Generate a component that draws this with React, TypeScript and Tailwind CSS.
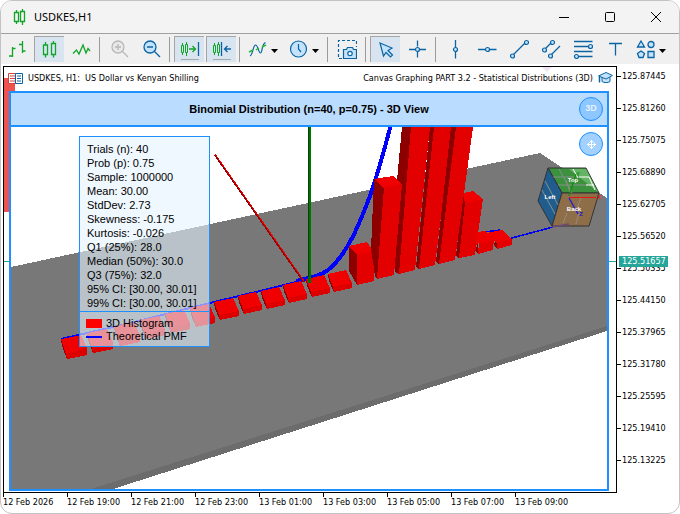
import React from 'react';
import clsx from 'clsx';

const GREEN = '#10a528';
const BLUE = '#0a64a4';
const SKY = '#c4e3fb';

const stats = [
  'Trials (n): 40',
  'Prob (p): 0.75',
  'Sample: 1000000',
  'Mean: 30.00',
  'StdDev: 2.73',
  'Skewness: -0.175',
  'Kurtosis: -0.026',
  'Q1 (25%): 28.0',
  'Median (50%): 30.0',
  'Q3 (75%): 32.0',
  '95% CI: [30.00, 30.01]',
  '99% CI: [30.00, 30.01]',
];

const prices = [
  '125.87445',
  '125.81260',
  '125.75075',
  '125.68890',
  '125.62705',
  '125.56520',
  '125.50335',
  '125.44150',
  '125.37965',
  '125.31780',
  '125.25595',
  '125.19410',
  '125.13225',
];

const times = [
  '12 Feb 2026',
  '12 Feb 19:00',
  '12 Feb 21:00',
  '12 Feb 23:00',
  '13 Feb 01:00',
  '13 Feb 03:00',
  '13 Feb 05:00',
  '13 Feb 07:00',
  '13 Feb 09:00',
];

// Low bars of the left tail: [x, y of the back right corner, width of the top, extra depth]
const tailBars = [
  [61, 335, 20, 2],
  [87, 329, 20, 2],
  [114, 322, 20, 2],
  [140, 316, 19, 1],
  [165, 310, 19, 1],
  [190, 304, 19, 1],
  [214, 298, 19, 0],
  [238, 292, 18, 0],
  [261, 287, 18, 0],
  [283, 281, 18, 0],
  [306, 275, 18, 0],
  [328, 270, 18, 0],
];

// Tall bars from left to right, each as dark side, front and top faces
const tallBars = [
  {
    side: '349,246 357,255 357,285 349,271',
    front: '357,255 374,252 374,281 357,285',
    top: '349,246 367,242 374,252 357,255',
  },
  {
    side: '402,127 411,127 399,274 395,272 397,180',
    front: '411,127 430,127 415,270 399,274',
    top: '',
  },
  {
    side: '374,179 384,188 377,279 375,277 374,268 371,250',
    front: '384,188 402,184 394,275 377,279',
    top: '374,179 393,176 402,184 384,188',
  },
  {
    side: '430,127 434,127 419,269 416,267',
    front: '434,127 452,127 435,265 419,269',
    top: '',
  },
  {
    side: '463,193 466,202 459,258 456,256',
    front: '465,202 483,199 475,255 459,258',
    top: '463,193 473,191 483,199 465,203',
  },
  {
    side: '451,127 456,127 439,264 436,262',
    front: '456,127 473,127 455,260 439,264',
    top: '',
  },
  {
    side: '475,251 478,243 478,254',
    front: '479,242 494,239 493,250 478,254',
    top: '477,232 485,231 494,240 479,243 476,245',
  },
  {
    side: '494,243 497,241 497,249 494,246',
    front: '497,242 512,239 512,245 497,249',
    top: '486,233 502,230 512,239 497,243',
  },
];

const Icon = ({ children, stroke = BLUE }: { children: React.ReactNode; stroke?: string }) => (
  <svg width="20" height="20" viewBox="0 0 20 20" fill="none" stroke={stroke} className="shrink-0">
    {children}
  </svg>
);

const Caret = () => (
  <svg width="8" height="5" viewBox="0 0 8 5" className="ml-[3px] mt-1">
    <path d="M0 0h7L3.500 4z" fill="#000" />
  </svg>
);

const Separator = () => <div className="ml-px mr-0.5 h-[25px] w-px bg-[#9b9b9b]" />;

type ToolProps = { label: string; active?: boolean; menu?: boolean; children: React.ReactNode };

const Tool = ({ label, active, menu, children }: ToolProps) => (
  <button
    type="button"
    aria-label={label}
    aria-pressed={active}
    className={clsx(
      'flex h-[26px] shrink-0 items-center',
      menu ? 'w-[39px] pl-1' : 'w-[30px] justify-center',
      active && 'border-l border-t border-[#a5a5a5] bg-[#d8e5f1]'
    )}
  >
    {children}
    {menu && <Caret />}
  </button>
);

const Toolbar = () => (
  <div className="flex items-center gap-0.5 bg-[#f0f0f0] py-0.5 pl-px" role="toolbar">
    <Tool label="Bar chart">
      <Icon stroke={GREEN}>
        <path d="M2 17h4M5.500 8v10M5.500 9.500h3M12 5.500h3M15.500 2v12M15.500 12h3" strokeWidth="1.300" />
      </Icon>
    </Tool>
    <Tool label="Candlesticks" active>
      <Icon stroke={GREEN}>
        <path d="M5.500 2v3M5.500 14.500v3M13.500 1v3M13.500 14.500v3" strokeWidth="1.300" />
        <path d="M3.500 5h4v9.500h-4zM11.500 3.500h4v11h-4z" strokeWidth="1.300" />
      </Icon>
    </Tool>
    <Tool label="Line chart">
      <Icon stroke={GREEN}>
        <path d="M2 14.500l3.500-3.500 2.500 4 4-9 3 8 2-4.500 2 2.500" strokeWidth="1.300" />
      </Icon>
    </Tool>
    <Separator />
    <Tool label="Zoom in">
      <Icon stroke="#b8b8b8">
        <circle cx="9" cy="8" r="6" fill="#e8e8e8" strokeWidth="1.300" />
        <path d="M6 8h6M9 5v6M13.500 12.500l5.500 5.500" strokeWidth="1.300" />
      </Icon>
    </Tool>
    <Tool label="Zoom out">
      <Icon>
        <circle cx="9" cy="8" r="6" fill={SKY} strokeWidth="1.300" />
        <path d="M6 8h6M13.500 12.500l5.500 5.500" strokeWidth="1.400" />
      </Icon>
    </Tool>
    <Separator />
    <Tool label="Auto scroll" active>
      <Icon stroke={GREEN}>
        <path d="M2.500 3v12M6.500 2v14" />
        <path d="M1.500 5.500h2v7h-2zM5.500 4.500h2v8h-2z" fill="#d8e5f1" />
        <path d="M9 9h6M12.500 6l3 3-3 3" strokeWidth="1.300" />
        <path d="M18.500 2v14" stroke={BLUE} strokeWidth="1.300" />
        <path d="M1 19.500h18" stroke="#a8a8a8" />
      </Icon>
    </Tool>
    <Tool label="Chart shift" active>
      <Icon stroke={GREEN}>
        <path d="M2.500 3v12M6.500 2v14" />
        <path d="M1.500 5.500h2v7h-2zM5.500 4.500h2v8h-2z" fill="#d8e5f1" />
        <path d="M9.500 2v14M19 9h-6M15.500 6l-3 3 3 3" stroke={BLUE} strokeWidth="1.300" />
        <path d="M1 19.500h18" stroke="#a8a8a8" />
      </Icon>
    </Tool>
    <Separator />
    <Tool label="Indicators" menu>
      <Icon>
        <path d="M2 17c3-1 3-11 5.500-11s3 8 5 8 1-9 5-10.500" strokeWidth="1.200" />
        <path d="M1 13l4-2M8 11l3-2M14 8l4-2" stroke="#22b83a" strokeWidth="1.500" />
      </Icon>
    </Tool>
    <Tool label="Timeframes" menu>
      <Icon>
        <circle cx="9.500" cy="10" r="8" fill={SKY} strokeWidth="1.200" />
        <path d="M9.500 5v5l2.500 3" strokeWidth="1.200" />
      </Icon>
    </Tool>
    <Separator />
    <Tool label="Screenshot">
      <Icon>
        <path d="M5 19.500H1.500V1.500h18V8" strokeDasharray="3 2" strokeWidth="1.200" />
        <path d="M6.500 10.500h3l1-2h5l1 2h3v9h-13z" fill={SKY} strokeWidth="1.200" />
        <circle cx="13" cy="14.500" r="2.200" fill="#fff" strokeWidth="1.200" />
      </Icon>
    </Tool>
    <Separator />
    <Tool label="Cursor" active>
      <Icon>
        <path d="M4 3l12 5-4 2.500 4.500 4.500-2 2-4.500-4.500-2.500 3.500z" fill={SKY} strokeWidth="1.200" />
      </Icon>
    </Tool>
    <Tool label="Crosshair">
      <Icon>
        <path d="M10.500 1.500v6M10.500 12.500v6M2 10.500h6M13 10.500h6" strokeWidth="1.300" />
        <circle cx="10.500" cy="10.500" r="2" fill={SKY} strokeWidth="1.200" />
      </Icon>
    </Tool>
    <Separator />
    <Tool label="Vertical line">
      <Icon>
        <path d="M10.500 1v7M10.500 12.500v7" strokeWidth="1.300" />
        <circle cx="10.500" cy="10.500" r="2" fill={SKY} strokeWidth="1.200" />
      </Icon>
    </Tool>
    <Tool label="Horizontal line">
      <Icon>
        <path d="M1 10.500h7M12.500 10.500h7" strokeWidth="1.300" />
        <circle cx="10.500" cy="10.500" r="2" fill={SKY} strokeWidth="1.200" />
      </Icon>
    </Tool>
    <Tool label="Trend line">
      <Icon>
        <path d="M4 16L17 3" strokeWidth="1.300" />
        <circle cx="3.500" cy="17" r="2" fill={SKY} strokeWidth="1.200" />
        <circle cx="17.500" cy="3.500" r="2" fill={SKY} strokeWidth="1.200" />
      </Icon>
    </Tool>
    <Tool label="Equidistant channel">
      <Icon>
        <path d="M3 11l8-8M9 17L19 7" strokeWidth="1.300" />
        <circle cx="3.500" cy="11" r="2" fill={SKY} strokeWidth="1.200" />
        <circle cx="11.500" cy="3.500" r="2" fill={SKY} strokeWidth="1.200" />
        <circle cx="9.500" cy="17" r="2" fill={SKY} strokeWidth="1.200" />
      </Icon>
    </Tool>
    <Tool label="Fibonacci levels">
      <Icon>
        <path d="M1 2.500h18.500M1 7.500h14M1 12.500h18.500M6 17.500h13.500" strokeWidth="1.300" />
        <circle cx="17.500" cy="7.500" r="2" fill={SKY} strokeWidth="1.200" />
        <circle cx="3.500" cy="17.500" r="2" fill={SKY} strokeWidth="1.200" />
      </Icon>
    </Tool>
    <Tool label="Text">
      <Icon>
        <path d="M4 4.500h13M10.500 4.500v12" strokeWidth="1.300" />
      </Icon>
    </Tool>
    <Tool label="Objects" menu>
      <Icon>
        <g fill={SKY} strokeWidth="1.300">
          <path d="M5 2l3.500 6h-7zM12 12.500h6v6h-6z" />
          <circle cx="15" cy="5.500" r="3" />
          <path d="M5 12l3.500 2.500-1.500 4H3l-1.500-4z" />
        </g>
      </Icon>
    </Tool>
  </div>
);

const TitleBar = () => (
  <header className="flex h-[33px] items-center border-b border-[#a0a0a0] bg-[#f3f3f3] pl-3">
    <svg width="13" height="16" viewBox="0 0 13 16" fill="none" stroke={GREEN} strokeWidth="1.300">
      <path d="M3.500 1v3M3.500 12v3M9.500 0v3M9.500 13v3M1.500 3.500h4v9h-4zM7.500 2.500h4v10h-4z" />
    </svg>
    <h1 className="ml-2 flex-1 font-['Noto_Sans','Open_Sans',sans-serif] text-[11px] leading-4 text-black">
      USDKES,H1
    </h1>
    <div className="flex text-black">
      <button type="button" aria-label="Minimize" className="flex h-8 w-[46px] items-center justify-center">
        <svg width="10" height="10" stroke="currentColor"><path d="M0 5.500h10" /></svg>
      </button>
      <button type="button" aria-label="Maximize" className="flex h-8 w-[46px] items-center justify-center">
        <svg width="10" height="10" fill="none" stroke="currentColor">
          <rect x="0.500" y="0.500" width="9" height="9" rx="1" />
        </svg>
      </button>
      <button type="button" aria-label="Close" className="flex h-8 w-[46px] items-center justify-center">
        <svg width="10" height="10" stroke="currentColor"><path d="M0 0l10 10M10 0L0 10" /></svg>
      </button>
    </div>
  </header>
);

const ViewCube = () => (
  <g>
    <g stroke="#333" strokeWidth="1">
      <path d="M548 168h38l13 25h-37z" fill="#3c913f" />
      <path d="M548 168l14 25-10 33-14-25z" fill="#215c8e" />
      <path d="M562 193h37l-10 33h-37z" fill="#8e6e48" />
    </g>
    <path d="M569 169h17l12 23z" fill="#64b464" />
    <path d="M559 169l13 24M553 177h25M558 185h30M545 181l13 24M542 190l13 24" stroke="#83908a" />
    <path d="M573 169l5 9M579 177h10M586 185h8M589 177l6 13" stroke="#fff" />
    <path d="M581 198l-4 10M567 213l-4 10M579 213l-3 11M566 180l4 12" stroke="#9a8a78" />
    <path d="M552 227l17-3" stroke="#6b4a78" strokeWidth="1.500" />
    <path d="M569 196l7-22" stroke="#109010" strokeWidth="1.300" />
    <path d="M569 197.500h27" stroke="#e01818" />
    <path d="M569 198l9 16" stroke="#1818e0" strokeWidth="1.300" />
    <g className="font-['Liberation_Sans',Arial,sans-serif] text-[6px] font-bold" fill="#fff" textAnchor="middle">
      <text x="573" y="182">Top</text>
      <text x="550" y="199">Left</text>
      <text x="574" y="211">Back</text>
      <text x="578" y="176" fill="#108a10">Y</text>
      <text x="599" y="199" fill="#e01818">X</text>
      <text x="581" y="216" fill="#1818d0">Z</text>
    </g>
  </g>
);

const Scene = () => (
  <svg viewBox="11 127 596 362" className="block w-full" role="img" aria-label="3D histogram of the distribution">
    <g shapeRendering="crispEdges">
      <path d="M11 267L540 153 607 198V331L113 489H11z" fill="#6c6c6c" />
      <path d="M11 267L540 153 607 198V326L91 489H11z" fill="#787878" />
      <path d="M476 233l24-3M508 239l45-12" stroke="#0000f0" strokeWidth="1.500" />
      <path d="M61 339L122 325 210 303 260 291 300 281" fill="none" stroke="#0000ff" strokeWidth="2" />
      <path
        d="M296 281C312 277 320 276 328 270C348 254 360 222 370 196C379 170 385 148 391 124"
        fill="none"
        stroke="#0000ff"
        strokeWidth="4"
      />
      <path d="M215 155l89 127" stroke="#900000" strokeWidth="2" />
      <path d="M215 154l89 127" stroke="#e80000" />
      {tailBars.map(([x, y, w, d]) => (
        <g key={x}>
          <path d={`M${x} ${y + 4}L${x + 1} ${y + 11}L${x + 6} ${y + 22 + d}V${y + 17}z`} fill="#8c0000" />
          <path
            d={`M${x + 5} ${y + 17 + d}L${x + w + 6} ${y + 13}V${y + 18 + d}L${x + 6} ${y + 22 + d}z`}
            fill="#dc0000"
          />
          <path
            d={`M${x} ${y + 4}L${x + w} ${y}L${x + w + 6} ${y + 13}L${x + 5} ${y + 17 + d}z`}
            fill="#f00000"
          />
        </g>
      ))}
      {tallBars.map((bar) => (
        <g key={bar.front}>
          <polygon points={bar.side} fill="#8c0000" />
          <polygon points={bar.front} fill="#e20000" />
          <polygon points={bar.top} fill="#f00000" />
        </g>
      ))}
      <path d="M309.500 127v156" stroke="#007400" strokeWidth="3" />
      <path d="M308.500 127v150" stroke="#004400" />
    </g>
    <ViewCube />
  </svg>
);

const StatsPanel = () => (
  <div className="absolute left-[68px] top-[9px] w-[131px] border border-[#1e90ff] bg-[#e6f3ff]/60 text-[11px] text-black">
    <ul className="px-[7px] pb-px pt-[5px] leading-[14px]">
      {stats.map((line) => (
        <li key={line} className="whitespace-nowrap">{line}</li>
      ))}
    </ul>
    <ul className="border-t border-[#1e90ff] px-1.5 pb-[3px] pt-[5px] leading-[13px]">
      <li className="flex items-center gap-1">
        <span className="h-[9px] w-4 bg-[#ff0000]" />
        3D Histogram
      </li>
      <li className="flex items-center gap-1">
        <span className="h-0.5 w-4 bg-[#0000ff]" />
        Theoretical PMF
      </li>
    </ul>
  </div>
);

const ChartFrame = () => (
  <section className="relative min-w-0 flex-1 border border-black pb-px pl-[5px] pr-[7px]">
    {/* Candle and price line behind the canvas */}
    <div className="absolute left-0 top-[11px] h-[134px] w-[11px] bg-[#ef5350]" />
    <div className="absolute inset-x-0 top-[194px] h-px bg-[#26a69a]" />
    <svg width="10" height="5" className="absolute right-16 top-0">
      <path d="M0 0h10L5 5z" fill="#eee4f0" />
    </svg>

    <div className="relative -ml-px flex h-6 items-center pb-0.5 text-[9px] leading-3 text-black">
      <svg width="15" height="11" viewBox="0 0 15 11" className="mr-[5px] shrink-0">
        <path d="M0.500 0.500h7v10h-7z" fill="#fff" stroke="#d8403c" />
        <path d="M2 3h5M2 5.500h5M2 8h5" stroke="#d8403c" />
        <path d="M7.500 0.500h7v10h-7z" fill="#fff" stroke={BLUE} />
        <path d="M9 3h4M9 5.500h4M9 8h4" stroke={BLUE} />
      </svg>
      <span className="flex-1 whitespace-pre">USDKES, H1:  US Dollar vs Kenyan Shilling</span>
      <span className="whitespace-nowrap">Canvas Graphing PART 3.2 - Statistical Distributions (3D)</span>
      <svg width="15" height="12" viewBox="0 0 15 12" className="-mr-1 ml-[5px] shrink-0" stroke={BLUE} fill={SKY}>
        <path d="M4 5v4.500c2 1.500 6 1.500 8 0V5" />
        <path d="M0.500 4L8 0.500 14.500 3.500 8 7z" />
        <path d="M1.500 4.500v6" fill="none" strokeWidth="1.500" />
      </svg>
    </div>

    <div className="relative border-2 border-[#1e90ff] bg-white font-['Liberation_Sans',Arial,sans-serif]">
      <div className="grid h-[34px] grid-cols-[24px_1fr_24px] items-center border-b-2 border-[#1e90ff] bg-[#badcff] px-1">
        <h2 className="col-start-2 text-center text-[11px] font-bold leading-4 text-black">
          Binomial Distribution (n=40, p=0.75) - 3D View
        </h2>
        <button
          type="button"
          className="size-6 rounded-full border border-[#1e90ff] bg-[#8ec6ff] text-[9px] font-bold text-[#e4f2ff]"
        >
          3D
        </button>
      </div>
      <div className="relative">
        <Scene />
        <StatsPanel />
        <button
          type="button"
          aria-label="Pan"
          className="absolute right-1 top-[5px] flex size-6 items-center justify-center rounded-full border border-[#1e90ff] bg-[#a2d0ff]"
        >
          <svg width="9" height="9" viewBox="0 0 9 9" fill="none" stroke="#fff">
            <path d="M4.500 0v9M0 4.500h9M2.500 2.500l2-2 2 2M2.500 6.500l2 2 2-2M2.500 2.500l-2 2 2 2M6.500 2.500l2 2-2 2" />
          </svg>
        </button>
      </div>
    </div>
  </section>
);

const PriceScale = () => (
  <aside className="relative flex w-[62px] shrink-0 flex-col gap-3 text-[9px] leading-5 text-black">
    {prices.map((price) => (
      <div key={price} className="flex items-center gap-px">
        <span className="h-px w-1 bg-black" />
        {price}
      </div>
    ))}
    <div className="absolute left-0.5 top-[190px] bg-[#26a69a] pl-[3px] pr-0.5 leading-[11px] text-white">
      125.51657
    </div>
  </aside>
);

const TimeScale = () => (
  <footer className="flex h-5 overflow-hidden pl-0.5 text-[9px] leading-[10px] text-black">
    {times.map((time) => (
      <div key={time} className="w-16 shrink-0 whitespace-nowrap">
        <div className="h-1 w-px bg-black" />
        {time}
      </div>
    ))}
  </footer>
);

const App = () => (
  <div className="flex min-h-screen flex-col overflow-hidden rounded-xl border border-[#c3c3c3] bg-white font-['DejaVu_Sans_Condensed','DejaVu_Sans',sans-serif]">
    <TitleBar />
    <Toolbar />
    <main className="flex pl-0.5 pt-0.5">
      <ChartFrame />
      <PriceScale />
    </main>
    <TimeScale />
  </div>
);

export default App;
